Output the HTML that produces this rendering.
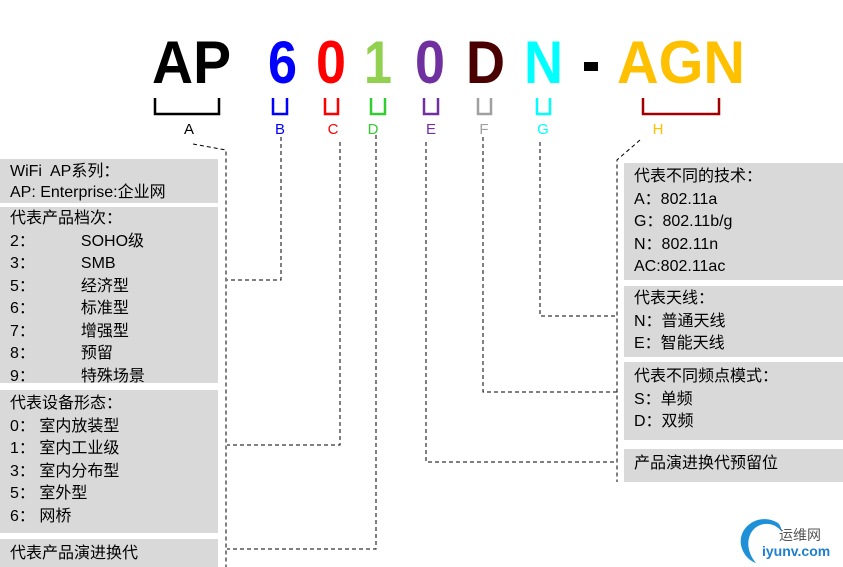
<!DOCTYPE html>
<html><head><meta charset="utf-8"><style>
body{margin:0;width:843px;height:567px;background:#fff;position:relative;overflow:hidden;font-family:"Liberation Sans","Noto Sans CJK SC",sans-serif;}
.box{position:absolute;background:#d9d9d9;color:#000;font-size:16px;line-height:22.5px;padding-left:10px;box-sizing:border-box;overflow:hidden}
.l{left:0;width:218px}
.r{left:624px;width:219px}
.t{display:inline-block;width:46px}
</style></head><body>
<svg width="843" height="567" style="position:absolute;left:0;top:0" xmlns="http://www.w3.org/2000/svg">
<g font-family="Liberation Sans, sans-serif" font-weight="bold" font-size="60">
<text x="152" y="83" fill="#000" textLength="79" lengthAdjust="spacingAndGlyphs">AP</text>
<text x="268" y="83" fill="#0000ff" textLength="29" lengthAdjust="spacingAndGlyphs">6</text>
<text x="316" y="83" fill="#ff0000" textLength="30" lengthAdjust="spacingAndGlyphs">0</text>
<text x="364" y="83" fill="#92d050" textLength="28" lengthAdjust="spacingAndGlyphs">1</text>
<text x="415" y="83" fill="#7030a0" textLength="30" lengthAdjust="spacingAndGlyphs">0</text>
<text x="466" y="83" fill="#4a0000" textLength="39" lengthAdjust="spacingAndGlyphs">D</text>
<text x="524" y="83" fill="#00ffff" textLength="39" lengthAdjust="spacingAndGlyphs">N</text>
<rect x="584" y="62" width="14" height="9" fill="#000"/>
<text x="617" y="83" fill="#ffc000" textLength="128" lengthAdjust="spacingAndGlyphs">AGN</text>
</g>
<g fill="none" stroke-width="2.5">
<path d="M155 98V114H219V98" stroke="#000"/>
<path d="M273 98V114H287V98" stroke="#0000ff"/>
<path d="M325 98V114H338V98" stroke="#ff0000"/>
<path d="M371 98V114H385V98" stroke="#33cc33"/>
<path d="M424 98V114H438V98" stroke="#7030a0"/>
<path d="M478 98V114H491V98" stroke="#a0a0a0"/>
<path d="M537 98V114H550V98" stroke="#00ffff"/>
<path d="M643 98V114H719V98" stroke="#a00000"/>
</g>
<g font-family="Liberation Sans, sans-serif" font-size="15" text-anchor="middle">
<text x="189" y="134" fill="#000">A</text>
<text x="280" y="134" fill="#0000ff">B</text>
<text x="333" y="134" fill="#ff0000">C</text>
<text x="373" y="134" fill="#33cc33">D</text>
<text x="431" y="134" fill="#7030a0">E</text>
<text x="484" y="134" fill="#a0a0a0">F</text>
<text x="543" y="134" fill="#00ffff">G</text>
<text x="658" y="134" fill="#ffc000">H</text>
</g>
<g fill="none" stroke="#000" stroke-width="1" stroke-dasharray="4,3">
<path d="M193 144L226 150V567"/>
<path d="M281 137V280H227"/>
<path d="M340 142V445H227"/>
<path d="M376 135V549H227"/>
<path d="M426 142V462H617"/>
<path d="M483 137V392H617"/>
<path d="M540 142V316H617"/>
<path d="M640 140L617 160V482"/>
</g>
<path d="M778 523C760 512 738 526 741 545C743 555 750 561 756 563C748 554 745 540 753 530C761 521 775 522 782 532C781 527 780 525 778 523Z" fill="#1e90d8"/>
<text x="779" y="540" font-family="Liberation Sans, Noto Sans CJK SC, sans-serif" font-size="14" fill="#555">运维网</text>
<text x="762" y="556" font-family="Liberation Sans, sans-serif" font-weight="bold" font-size="14" fill="#1e7fcf">iyunv.com</text>
</svg>
<div class="box l" style="top:159px;height:44px;line-height:21px;padding-top:2px">WiFi&nbsp; AP系列：<br>AP: Enterprise:企业网</div>
<div class="box l" style="top:207px;height:176px;padding-top:1px">代表产品档次：<br>2：<span class="t"></span>SOHO级<br>3：<span class="t"></span>SMB<br>5：<span class="t"></span>经济型<br>6：<span class="t"></span>标准型<br>7：<span class="t"></span>增强型<br>8：<span class="t"></span>预留<br>9：<span class="t"></span>特殊场景</div>
<div class="box l" style="top:390px;height:143px;padding-top:3px">代表设备形态：<br>0：&nbsp;室内放装型<br>1：&nbsp;室内工业级<br>3：&nbsp;室内分布型<br>5：&nbsp;室外型<br>6：&nbsp;网桥</div>
<div class="box l" style="top:539px;height:28px;padding-top:4px">代表产品演进换代</div>
<div class="box r" style="top:163px;height:117px;padding-top:3px">代表不同的技术：<br>A：802.11a<br>G：802.11b/g<br>N：802.11n<br>AC:802.11ac</div>
<div class="box r" style="top:286px;height:71px;padding-top:2px">代表天线：<br>N：普通天线<br>E：智能天线</div>
<div class="box r" style="top:362px;height:78px;padding-top:4px">代表不同频点模式：<br>S：单频<br>D：双频</div>
<div class="box r" style="top:449px;height:33px;padding-top:4px">产品演进换代预留位</div>
</body></html>
